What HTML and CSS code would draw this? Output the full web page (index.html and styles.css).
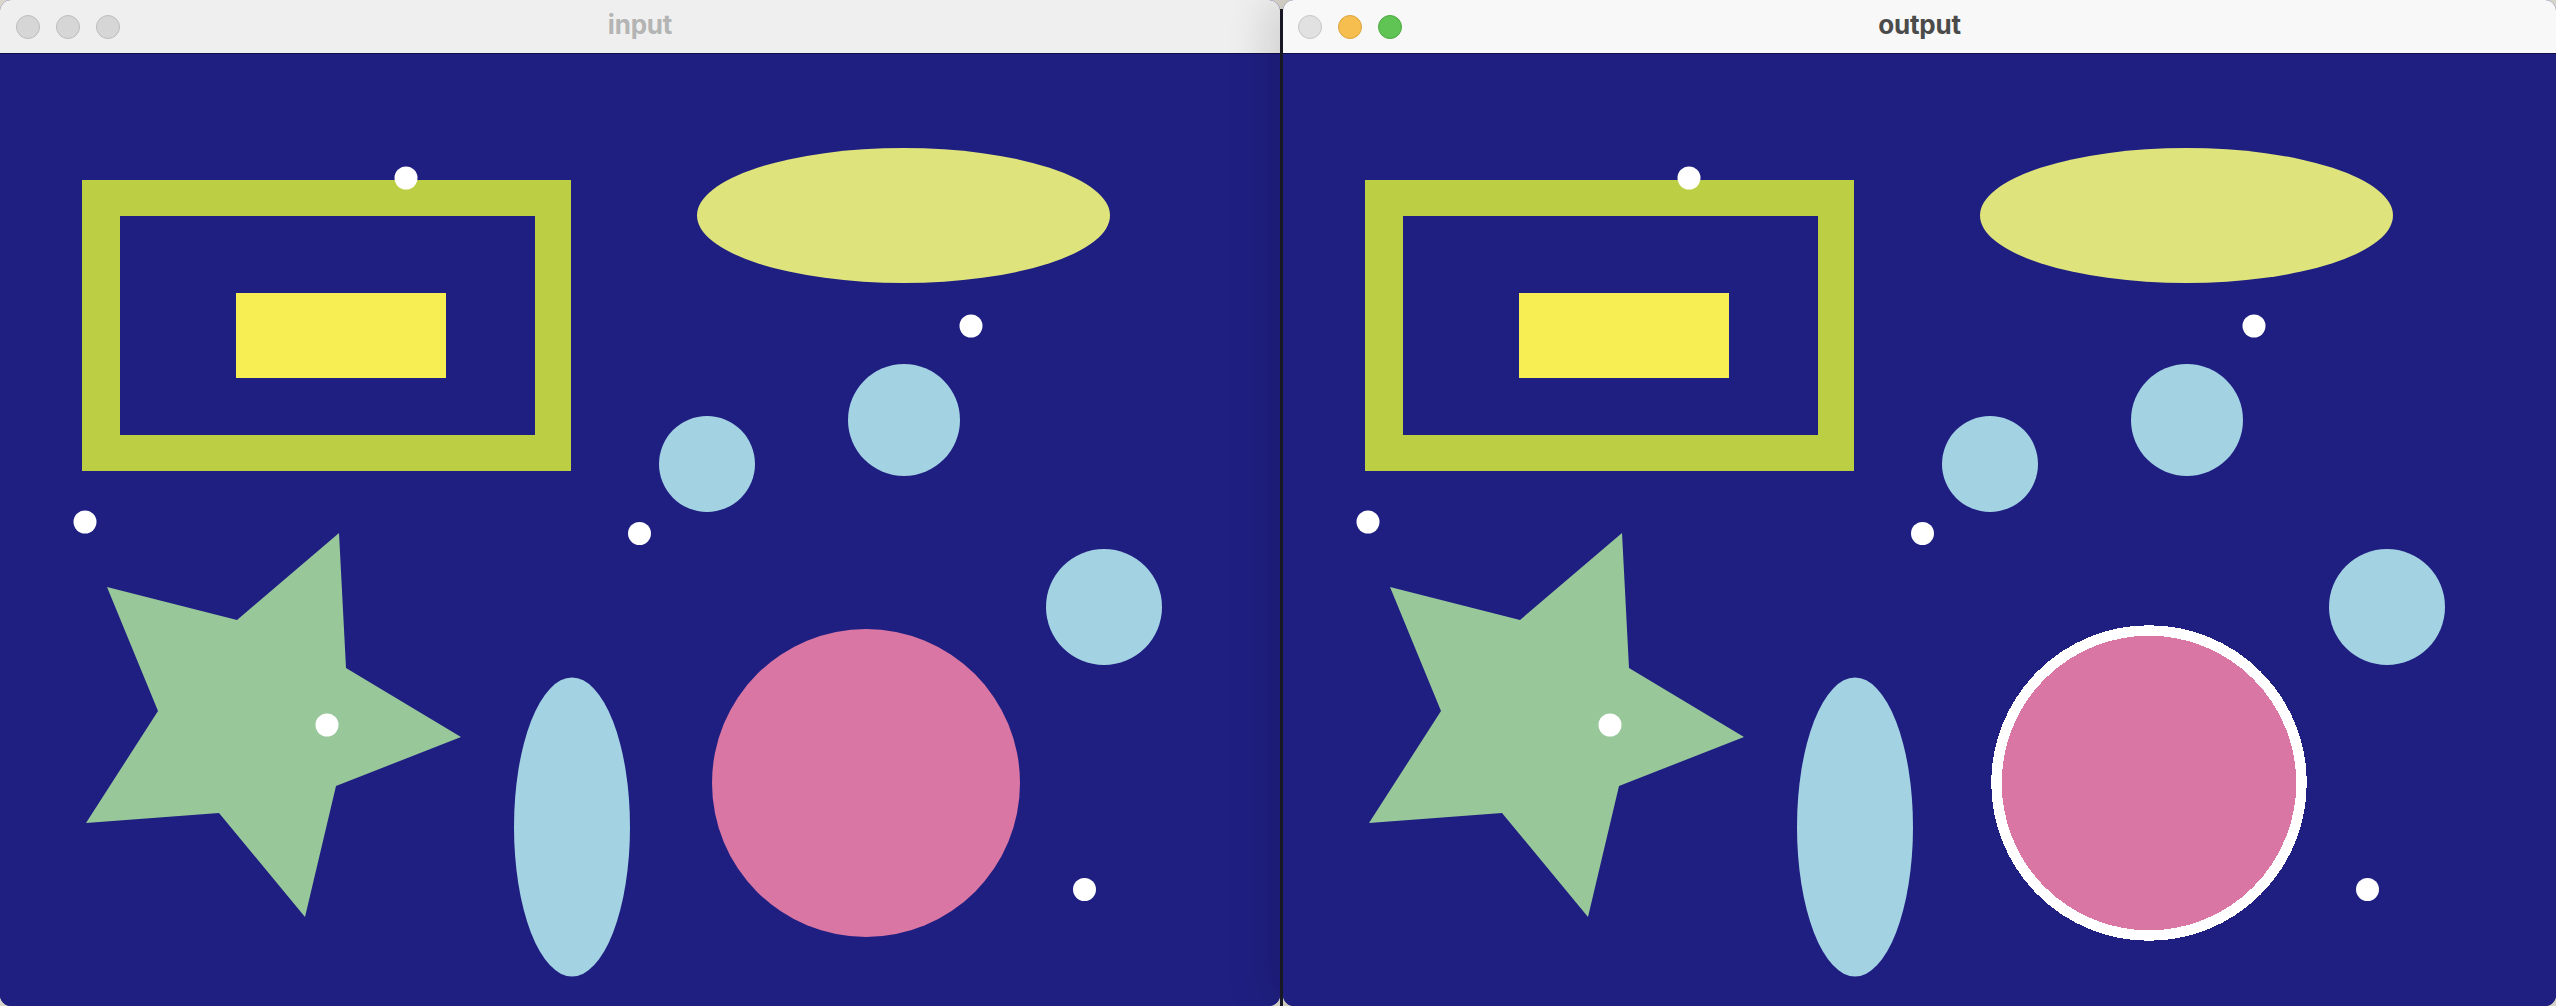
FILE: index.html
```html
<!DOCTYPE html>
<html lang="en">
<head>
<meta charset="utf-8">
<title>input / output</title>
<link rel="stylesheet" href="styles.css">
</head>
<body>
<div class="desk">
  <section class="win win-in">
    <header class="bar">
      <div class="lights">
        <span class="light"></span><span class="light"></span><span class="light"></span>
      </div>
      <h1 class="title">input</h1>
      <div class="spacer"></div>
    </header>
    <div class="canvas">
      <svg class="scene" width="1280" height="952" viewBox="0 54 1280 952" xmlns="http://www.w3.org/2000/svg">
        <rect x="0" y="54" width="1280" height="952" fill="#1f1f82"/>
        <path d="M82 180H571V471H82Z M120 216V435H535V216Z" fill="#bccf44" fill-rule="evenodd"/>
        <rect x="236" y="293" width="210" height="85" fill="#f6ee53"/>
        <ellipse cx="903.5" cy="215.5" rx="206.5" ry="67.5" fill="#dee47b"/>
        <circle cx="904" cy="420" r="56" fill="#a3d2e3"/>
        <circle cx="707" cy="464" r="48" fill="#a3d2e3"/>
        <circle cx="1104" cy="607" r="58" fill="#a3d2e3"/>
        <polygon points="339,533 346,668 461,737 336,786 305,917 219,813 86,823 158,711 107,587 237,620" fill="#98c79a"/>
        <ellipse cx="572" cy="827" rx="58" ry="149.5" fill="#a3d2e3"/>
        <circle cx="866" cy="783" r="154" fill="#da76a4"/>
        <circle cx="406" cy="178" r="11.5" fill="#ffffff"/>
        <circle cx="971" cy="326" r="11.5" fill="#ffffff"/>
        <circle cx="85" cy="522" r="11.5" fill="#ffffff"/>
        <circle cx="639.5" cy="533.5" r="11.5" fill="#ffffff"/>
        <circle cx="327" cy="725" r="11.5" fill="#ffffff"/>
        <circle cx="1084.5" cy="889.5" r="11.5" fill="#ffffff"/>
      </svg>
    </div>
  </section>
  <div class="seam"></div>
  <section class="win win-out">
    <header class="bar">
      <div class="lights">
        <span class="light light-close"></span><span class="light light-min"></span><span class="light light-max"></span>
      </div>
      <h1 class="title">output</h1>
      <div class="spacer"></div>
    </header>
    <div class="canvas">
      <svg class="scene" width="1273" height="952" viewBox="0 54 1273 952" xmlns="http://www.w3.org/2000/svg">
        <rect x="0" y="54" width="1273" height="952" fill="#1f1f82"/>
        <path d="M82 180H571V471H82Z M120 216V435H535V216Z" fill="#bccf44" fill-rule="evenodd"/>
        <rect x="236" y="293" width="210" height="85" fill="#f6ee53"/>
        <ellipse cx="903.5" cy="215.5" rx="206.5" ry="67.5" fill="#dee47b"/>
        <circle cx="904" cy="420" r="56" fill="#a3d2e3"/>
        <circle cx="707" cy="464" r="48" fill="#a3d2e3"/>
        <circle cx="1104" cy="607" r="58" fill="#a3d2e3"/>
        <polygon points="339,533 346,668 461,737 336,786 305,917 219,813 86,823 158,711 107,587 237,620" fill="#98c79a"/>
        <ellipse cx="572" cy="827" rx="58" ry="149.5" fill="#a3d2e3"/>
        <circle cx="866" cy="783" r="154" fill="#da76a4"/>
        <circle cx="866" cy="783" r="152.5" fill="none" stroke="#ffffff" stroke-width="10.5" shape-rendering="crispEdges"/>
        <circle cx="406" cy="178" r="11.5" fill="#ffffff"/>
        <circle cx="971" cy="326" r="11.5" fill="#ffffff"/>
        <circle cx="85" cy="522" r="11.5" fill="#ffffff"/>
        <circle cx="639.5" cy="533.5" r="11.5" fill="#ffffff"/>
        <circle cx="327" cy="725" r="11.5" fill="#ffffff"/>
        <circle cx="1084.5" cy="889.5" r="11.5" fill="#ffffff"/>
      </svg>
    </div>
  </section>
</div>
</body>
</html>
```
FILE: styles.css
```css
html, body {
  margin: 0;
  padding: 0;
}
body {
  width: 2556px;
  height: 1006px;
  overflow: hidden;
  background: #d9d6cc;
  font-family: Inter, "Liberation Sans", sans-serif;
}
.desk {
  display: flex;
  width: 2556px;
  height: 1006px;
}
.win {
  display: flex;
  flex-direction: column;
  overflow: hidden;
  border-radius: 11px;
}
.win-in {
  width: 1280px;
  flex: 0 0 1280px;
  background: #1f1f82;
}
.seam {
  flex: 0 0 3px;
  background: #1b1b28;
  margin-top: 9px;
}
.win-out {
  flex: 1 1 auto;
  background: #1f1f82;
  box-shadow: -18px 0 40px rgba(0, 0, 0, 0.12);
}
.bar {
  height: 53px;
  flex: 0 0 53px;
  display: grid;
  grid-template-columns: 1fr auto 1fr;
  align-items: center;
  border-bottom: 1px solid #0f0f4a;
}
.win-in .bar {
  background: #eeefee;
}
.win-out .bar {
  background: #f7f8f7;
}
.lights {
  display: flex;
  gap: 16px;
  padding-left: 16px;
}
.win-out .lights {
  padding-left: 15px;
}
.light {
  width: 22px;
  height: 22px;
  border-radius: 50%;
  background: #d5d6d5;
  border: 1px solid #bcbdbc;
}
.light-close {
  background: #e0e1e0;
  border-color: #c6c7c6;
}
.light-min {
  background: #f6be4f;
  border-color: #dca43e;
}
.light-max {
  background: #60c454;
  border-color: #4aa93f;
}
.title {
  margin: 0 0 4px;
  font-size: 26px;
  font-weight: 700;
  line-height: 30px;
  letter-spacing: -0.2px;
}
.win-in .title {
  color: #b3b4b3;
}
.win-out .title {
  color: #4a4b4a;
}
.canvas {
  flex: 1 1 auto;
  overflow: hidden;
}
.scene {
  display: block;
}
```
